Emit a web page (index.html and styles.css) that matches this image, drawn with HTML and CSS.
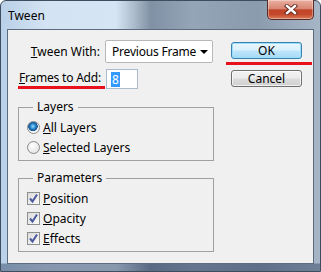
FILE: index.html
```html
<!DOCTYPE html>
<html lang="en">
    <head>
        <meta charset="UTF-8">
        <title>Tween</title>
        <link rel="stylesheet" href="styles.css">
    </head>
    <body>
        <div class="window">
            <div class="titlebar">
                <div class="title">Tween</div>
                <div class="close">
                    <svg width="14" height="11" viewBox="0 0 14 11">
                        <path d="M3 2 L11 9 M11 2 L3 9" stroke="#5a2418" stroke-width="4.2" stroke-linecap="square"/>
                        <path d="M3 2 L11 9 M11 2 L3 9" stroke="#fff" stroke-width="2.4" stroke-linecap="square"/>
                    </svg>
                </div>
            </div>
            <div class="client">
                <div class="left-col">
                    <div class="form-grid">
                        <label class="lbl"><u>T</u>ween With:</label>
                        <div class="select">
                            <span>Previous Frame</span>
                            <span class="arrow"></span>
                        </div>
                        <label class="lbl lbl-top"><span class="marked"><u>F</u>rames to Add:</span></label>
                        <div class="input"><span class="sel">8</span></div>
                    </div>

                    <fieldset class="group group-layers">
                        <legend>Layers</legend>
                        <div class="opt"><span class="radio checked"></span><u>A</u>ll Layers</div>
                        <div class="opt"><span class="radio"></span><u>S</u>elected Layers</div>
                    </fieldset>

                    <fieldset class="group group-params">
                        <legend>Parameters</legend>
                        <div class="opt"><span class="check"></span><u>P</u>osition</div>
                        <div class="opt"><span class="check"></span><u>O</u>pacity</div>
                        <div class="opt"><span class="check"></span><u>E</u>ffects</div>
                    </fieldset>
                </div>
                <div class="right-col">
                    <div class="btn btn-default">OK</div>
                    <div class="red-line"></div>
                    <div class="btn">Cancel</div>
                </div>
            </div>
        </div>
    </body>
</html>
```
FILE: styles.css
```css
*{
    margin: 0;
    padding: 0;
    box-sizing: border-box;
}
body{
    width: 321px;
    height: 272px;
    overflow: hidden;
    font-family: "Noto Sans", "Liberation Sans", sans-serif;
    font-size: 12px;
    color: #000;
    background: #fff;
}
.window{
    height: 272px;
    border: 1px solid #3e4e5f;
    border-radius: 6px 6px 0 0;
    display: flex;
    flex-direction: column;
    background:
        linear-gradient(to bottom, rgba(255,255,255,0) 262px, rgba(40,60,90,.45) 263px),
        linear-gradient(90deg, #b9d0e8 0%, #d3e3f3 14%, #d6e5f3 36%, #a9b9ca 42%, #8191a5 47%, #94a5b8 60%, #8a9bae 80%, #a6b6c7 100%);
}
.titlebar{
    height: 28px;
    display: flex;
    justify-content: space-between;
    align-items: flex-start;
}
.title{
    padding: 7px 0 0 7px;
    line-height: 16px;
    font-size: 12px;
}
.close{
    width: 47px;
    height: 20px;
    margin: -1px 6px 0 0;
    border: 1px solid #5a2c26;
    border-top: none;
    border-radius: 0 0 5px 5px;
    background: linear-gradient(#eab0a2, #d98772 45%, #c1452a 52%, #c4482b 75%, #da7c5c);
    box-shadow: inset 0 0 0 1px rgba(255,255,255,.35);
    display: flex;
    align-items: center;
    justify-content: center;
}
.client{
    flex: 1;
    margin: 0 6px 7px;
    background: #f0f0f0;
    border: 1px solid #5c6c7e;
    display: flex;
    padding: 10px 0 0 9px;
}
.left-col{
    width: 196px;
}
.form-grid{
    display: grid;
    grid-template-columns: 88px 108px;
    grid-template-rows: 23px 20px;
    row-gap: 6px;
}
.lbl{
    text-align: right;
    padding-right: 5px;
    align-self: center;
    line-height: 16px;
    white-space: nowrap;
}
.lbl-top{
    align-self: start;
    padding-right: 0;
    margin-left: -6px;
}
.marked{
    display: inline-block;
    margin-top: 1px;
    line-height: 16px;
    padding: 0 4px 0 1px;
    border-bottom: 3px solid #e8101a;
    letter-spacing: -0.2px;
}
.select{
    height: 23px;
    background: #fff;
    border: 1px solid #b8b8b8;
    border-radius: 2px;
    display: flex;
    align-items: center;
    justify-content: space-between;
    padding: 0 4px 0 6px;
    letter-spacing: -0.2px;
}
.arrow{
    width: 0;
    height: 0;
    border-left: 4px solid transparent;
    border-right: 4px solid transparent;
    border-top: 4px solid #000;
}
.input{
    width: 32px;
    height: 20px;
    margin-left: 1px;
    background: #fff;
    border: 1px solid #abbccd;
    padding: 1px 0 0 4px;
}
.sel{
    display: inline-block;
    background: #3399ff;
    color: #fff;
    line-height: 15px;
    padding: 0 1px;
}
.group{
    border: 1px solid #a0a0a0;
    margin-left: 1px;
    width: 196px;
    min-width: 0;
}
.group legend{
    margin-left: 14px;
    padding: 0 4px;
    line-height: 16px;
}
.group-layers{
    margin-top: 10px;
    padding: 2px 0 3px;
}
.group-params{
    margin-top: 9px;
    padding: 2px 0 3px;
}
.opt{
    height: 20px;
    display: flex;
    align-items: center;
    padding-left: 8px;
}
.radio{
    width: 13px;
    height: 13px;
    border-radius: 50%;
    border: 1px solid #8a8a8a;
    background: radial-gradient(circle at 40% 35%, #fff, #dcdcdc);
    margin-right: 3px;
}
.radio.checked{
    background: radial-gradient(circle at 45% 40%, #9fd7f6 0, #2a8ad0 2.5px, #14508e 4.5px, #e8e8e8 5px, #fdfdfd 6px);
}
.check{
    width: 13px;
    height: 13px;
    border: 1px solid #8e8f8f;
    background:
        url("data:image/svg+xml,%3Csvg xmlns='http://www.w3.org/2000/svg' width='11' height='11'%3E%3Cpath d='M2 5.5 L4.5 8.5 L9 1.5' fill='none' stroke='%234a5a9c' stroke-width='2'/%3E%3C/svg%3E") center no-repeat,
        linear-gradient(135deg, #dcdcdc, #fbfbfb);
    margin-right: 3px;
}
.right-col{
    margin-left: 18px;
    width: 71px;
}
.btn{
    height: 17px;
    border: 1px solid #707070;
    border-radius: 3px;
    text-align: center;
    line-height: 15px;
    background: linear-gradient(#f2f2f2 0%, #ebebeb 48%, #dddddd 52%, #cfcfcf 100%);
    box-shadow: inset 0 0 0 1px rgba(255,255,255,.7);
}
.btn-default{
    margin-top: 2px;
    border-color: #3c7fb1;
    background: linear-gradient(#eaf6fd 0%, #d9f0fc 48%, #bee6fd 52%, #a7d9f5 100%);
    box-shadow: inset 0 0 0 1px #9be0fb;
}
.red-line{
    height: 3px;
    margin: 3px -10px 5px -5px;
    background: #e8101a;
}
```
